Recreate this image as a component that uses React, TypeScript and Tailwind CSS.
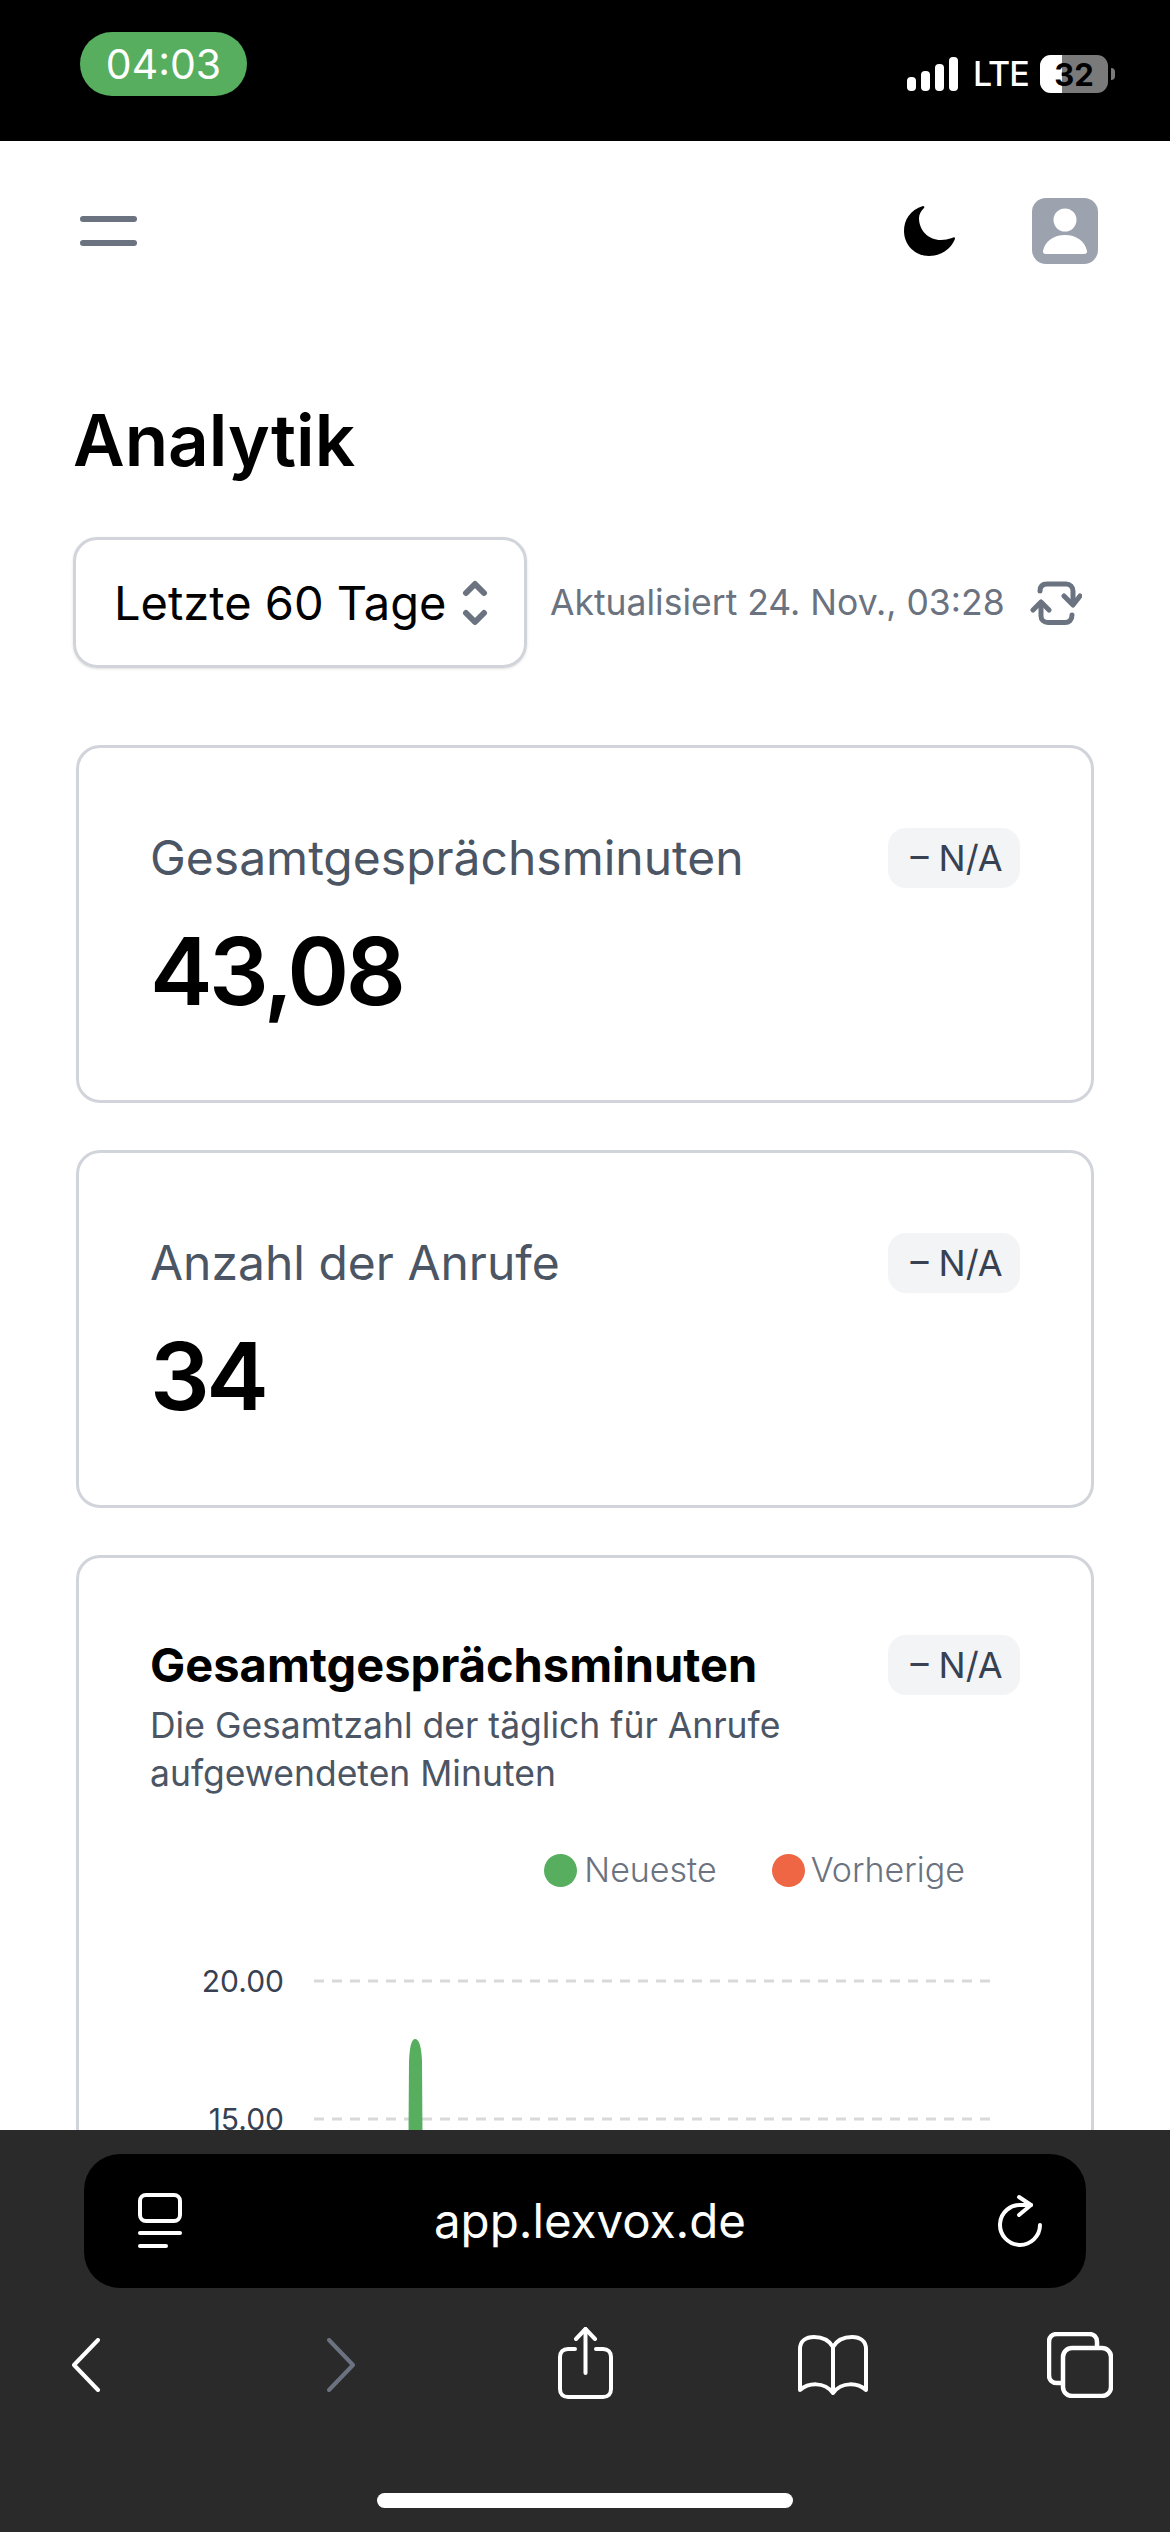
const sans = "font-['Inter','Noto_Sans',sans-serif]";

function Badge() {
  return (
    <div className="flex h-[60px] w-[132px] shrink-0 items-center justify-center rounded-[18px] bg-[#f3f4f6] pl-[5px] text-[36px] leading-none text-[#374151]">
      – N/A
    </div>
  );
}

function StatCard({ label, value }: { label: string; value: string }) {
  return (
    <div className="ml-[3px] flex h-[358px] shrink-0 items-start justify-between rounded-[24px] border-[3px] border-[#d1d5db] pl-[71px] pr-[71px] pt-[80px]">
      <div>
        <div className="text-[48px] leading-[60px] text-[#4b5563]">{label}</div>
        <div className="mt-[28px] text-[94px] font-semibold leading-[110px] tracking-[-3.5px] text-black">{value}</div>
      </div>
      <Badge />
    </div>
  );
}

function Chart() {
  return (
    <svg className="ml-[3px] mt-[57px] block" width="866" height="260" viewBox="0 0 866 260">
      <g stroke="#d9d9d9" strokeWidth="3" strokeDasharray="10 8">
        <line x1="161" y1="30" x2="838" y2="30" />
        <line x1="161" y1="168" x2="838" y2="168" />
      </g>
      <g fill="#374151" fontSize="30" textAnchor="end">
        <text x="131" y="41">20.00</text>
        <text x="131" y="179">15.00</text>
      </g>
      <path d="M255 260 L256 110 Q257 88 262 88 Q268 88 269 110 L270 260 Z" fill="#57ae5f" />
    </svg>
  );
}

export default function App() {
  return (
    <div className={`flex h-[2532px] w-[1170px] flex-col overflow-hidden bg-white ${sans}`}>
      {/* status bar */}
      <div className="flex h-[141px] shrink-0 items-start justify-between bg-black pl-[80px] pr-[55px]">
        <div className="mt-[32px] flex h-[64px] w-[167px] items-center justify-center rounded-[32px] bg-[#57ae5f] text-[41px] font-normal leading-none text-white">
          04:03
        </div>
        <div className="mt-[55px] flex h-[38px] items-center">
          <svg width="51" height="34" viewBox="0 0 51 34" fill="white">
            <rect x="0" y="20" width="9" height="14" rx="4" />
            <rect x="14" y="14" width="9" height="20" rx="4" />
            <rect x="28" y="7" width="9" height="27" rx="4" />
            <rect x="42" y="0" width="9" height="34" rx="4" />
          </svg>
          <span className="ml-[15px] w-[52px] text-[34px] font-medium leading-none tracking-[-1px] text-white">LTE</span>
          <div className="relative ml-[15px] flex h-[38px] w-[68px] items-center justify-center overflow-hidden rounded-[11px] bg-[#7a7a7a]">
            <div className="absolute inset-y-0 left-0 w-[22px] bg-white" />
            <span className="relative text-[31px] font-bold leading-none text-black">32</span>
          </div>
          <div className="ml-[3px] h-[12px] w-[4px] rounded-r-full bg-[#7a7a7a]" />
        </div>
      </div>

      {/* page */}
      <div className="min-h-0 flex-1 overflow-hidden pl-[73px] pr-[76px]">
        <div className="-mr-[4px] mt-[57px] flex h-[66px] items-center">
          <div className="ml-[7px] flex w-[57px] flex-col gap-[18px]">
            <div className="h-[6px] rounded-full bg-[#6b7280]" />
            <div className="h-[6px] rounded-full bg-[#6b7280]" />
          </div>
          <svg className="ml-auto" width="52" height="50" viewBox="0 0 52 50">
            <path d="M19 0 C6 4 0 14 0 25 C0 39 11 50 25 50 C37 50 47 43 51 33 C51 31 50 31 48 32 C44 33 41 34 37 34 C24 34 15 24 15 12 C15 8 17 5 20 2 C21 1 20 0 19 0 Z" fill="black" />
          </svg>
          <svg className="ml-[76px]" width="66" height="66" viewBox="0 0 66 66">
            <rect width="66" height="66" rx="14" fill="#9ca3af" />
            <circle cx="33" cy="22" r="11.5" fill="white" />
            <path d="M11 53 C13 43 22 37 33 37 C44 37 53 43 55 53 C55.500 55 54 56 52 56 L14 56 C12 56 10.500 55 11 53 Z" fill="white" />
          </svg>
        </div>

        <h1 className="mt-[136px] text-[71px] font-semibold leading-[80px] text-black">Analytik</h1>

        <div className="mt-[57px] flex items-center">
          <div className="flex h-[131px] w-[454px] items-center rounded-[24px] border-[3px] border-[#d1d5db] pl-[38px] shadow-sm">
            <span className="text-[47px] leading-none text-black">Letzte 60 Tage</span>
            <svg className="ml-[16px]" width="26" height="46" viewBox="0 0 26 46" fill="none" stroke="#6b7280" strokeWidth="6" strokeLinecap="round" strokeLinejoin="round">
              <path d="M4 13 L13 4 L22 13" />
              <path d="M4 33 L13 42 L22 33" />
            </svg>
          </div>
          <span className="ml-[23px] text-[35.500px] leading-none text-[#6b7280]">Aktualisiert 24. Nov., 03:28</span>
          <svg className="ml-auto mr-[12px]" width="52" height="44" viewBox="0 0 52 44" fill="none" stroke="#6b7280" strokeWidth="5" strokeLinecap="round" strokeLinejoin="round">
            <path d="M10 10 C10 5 13 3 17 3 H36 C40 3 43 6 43 10 V22" />
            <path d="M34 15 L43 24 L50 15" />
            <path d="M11 22 V35 C11 39 14 41.500 18 41.500 H35 C39 41.500 42 39 42 34" />
            <path d="M3 29 L11 21 L19 29" />
          </svg>
        </div>

        <div className="mt-[77px] flex flex-col gap-[47px]">
          <StatCard label="Gesamtgesprächsminuten" value="43,08" />
          <StatCard label="Anzahl der Anrufe" value="34" />
          <div className="ml-[3px] h-[800px] shrink-0 rounded-[24px] border-[3px] border-[#d1d5db] pl-[71px] pr-[71px] pt-[77px]">
            <div className="flex items-start justify-between">
              <div className="text-[47px] font-bold leading-[60px] text-black">Gesamtgesprächsminuten</div>
              <div><Badge /></div>
            </div>
            <p className="mt-[7px] w-[700px] text-[35.500px] leading-[48px] text-[#4b5563]">
              Die Gesamtzahl der täglich für Anrufe aufgewendeten Minuten
            </p>
            <div className="mr-[55px] mt-[48px] flex h-[48px] items-center justify-end text-[34px] font-light leading-none text-[#6b7280]">
              <div className="h-[33px] w-[33px] rounded-full bg-[#57ae5f]" />
              <span className="ml-[7px]">Neueste</span>
              <div className="ml-[55px] h-[33px] w-[33px] rounded-full bg-[#ee6644]" />
              <span className="ml-[6px]">Vorherige</span>
            </div>
            <Chart />
          </div>
        </div>
      </div>

      {/* browser toolbar */}
      <div className="h-[402px] shrink-0 bg-[#2a2a2a]">
        <div className="mx-[84px] mt-[24px] flex h-[134px] items-center rounded-[36px] bg-black pl-[54px] pr-[44px] text-white">
          <svg width="44" height="56" viewBox="0 0 44 56" fill="none" stroke="white" strokeWidth="4" strokeLinecap="round">
            <rect x="2" y="2" width="40" height="26" rx="6" />
            <line x1="2" y1="40" x2="42" y2="40" />
            <line x1="2" y1="53" x2="28" y2="53" />
          </svg>
          <span className="flex-1 text-center text-[47.500px] leading-none">app.lexvox.de</span>
          <svg width="44" height="54" viewBox="0 0 44 54" fill="none" stroke="white" strokeWidth="4" strokeLinecap="round" strokeLinejoin="round">
            <path d="M33 11 H24 A20 20 0 1 0 42 31" />
            <path d="M21 3 L33 11 L21 21" />
          </svg>
        </div>
        <div className="mt-[43px] flex items-start pl-[72px] text-white">
          <svg className="mt-[7px]" width="28" height="54" viewBox="0 0 28 54" fill="none" stroke="white" strokeWidth="4" strokeLinecap="round" strokeLinejoin="round">
            <path d="M26 2 L2 27 L26 52" />
          </svg>
          <svg className="ml-[227px] mt-[7px]" width="28" height="54" viewBox="0 0 28 54" fill="none" stroke="#6b7280" strokeWidth="4" strokeLinecap="round" strokeLinejoin="round">
            <path d="M2 2 L26 27 L2 52" />
          </svg>
          <svg className="ml-[203px] mt-[-4px]" width="55" height="72" viewBox="0 0 55 72" fill="none" stroke="white" strokeWidth="4" strokeLinecap="round" strokeLinejoin="round">
            <path d="M17 22 H10 C5 22 2 25 2 30 V62 C2 67 5 70 10 70 H45 C50 70 53 67 53 62 V30 C53 25 50 22 45 22 H38" />
            <path d="M27.500 46 V2" />
            <path d="M18 12 L27.500 2 L37 12" />
          </svg>
          <svg className="ml-[185px] mt-[4px]" width="70" height="60" viewBox="0 0 70 60" fill="none" stroke="white" strokeWidth="4" strokeLinecap="round" strokeLinejoin="round">
            <path d="M35 12 C31 5 24 2 16 2 C8 2 2 6 2 14 V55 C10 48 26 46 35 58 C44 46 60 48 68 55 V14 C68 6 62 2 54 2 C46 2 39 5 35 12 Z" />
            <path d="M35 12 V56" />
          </svg>
          <svg className="ml-[179px] mt-[1px]" width="66" height="66" viewBox="0 0 66 66" fill="none" stroke="white" strokeWidth="4.500" strokeLinecap="round" strokeLinejoin="round">
            <path d="M14 51 H10 C5 51 2 48 2 43 V10 C2 5 5 2 10 2 H42 C47 2 50 5 50 10 V15" />
            <rect x="16" y="16" width="48" height="48" rx="9" />
          </svg>
        </div>
        <div className="mx-auto mt-[94px] h-[15px] w-[416px] rounded-full bg-white" />
      </div>
    </div>
  );
}
